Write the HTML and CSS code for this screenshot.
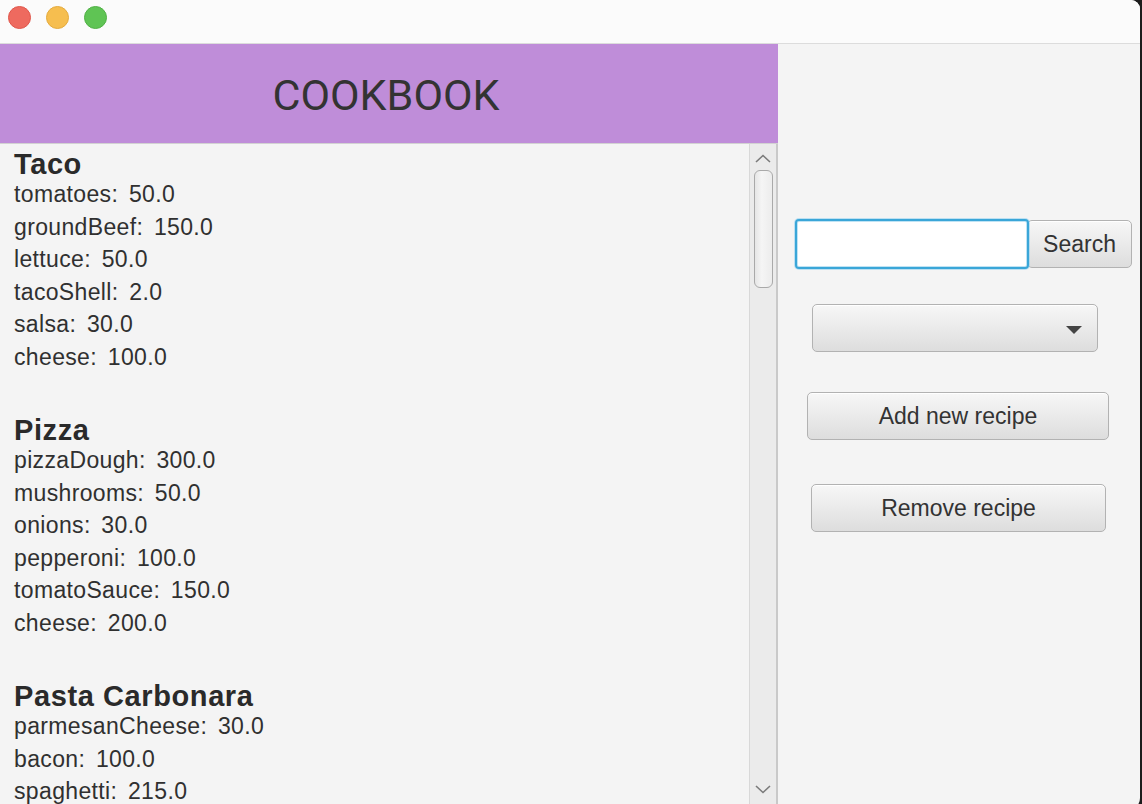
FILE: index.html
```html
<!DOCTYPE html>
<html>
<head>
<meta charset="utf-8">
<title>Cookbook</title>
<link rel="stylesheet" href="styles.css">
</head>
<body>
<div class="window">
  <div class="titlebar">
    <span class="light red"></span>
    <span class="light yellow"></span>
    <span class="light green"></span>
  </div>
  <div class="main">
    <div class="left">
      <div class="header">COOKBOOK</div>
      <div class="scrollpane">
        <div class="list">
          <div class="recipe">
            <div class="rtitle">Taco</div>
            <div class="ing">tomatoes: 50.0</div>
            <div class="ing">groundBeef: 150.0</div>
            <div class="ing">lettuce: 50.0</div>
            <div class="ing">tacoShell: 2.0</div>
            <div class="ing">salsa: 30.0</div>
            <div class="ing">cheese: 100.0</div>
          </div>
          <div class="recipe">
            <div class="rtitle">Pizza</div>
            <div class="ing">pizzaDough: 300.0</div>
            <div class="ing">mushrooms: 50.0</div>
            <div class="ing">onions: 30.0</div>
            <div class="ing">pepperoni: 100.0</div>
            <div class="ing">tomatoSauce: 150.0</div>
            <div class="ing">cheese: 200.0</div>
          </div>
          <div class="recipe">
            <div class="rtitle">Pasta Carbonara</div>
            <div class="ing">parmesanCheese: 30.0</div>
            <div class="ing">bacon: 100.0</div>
            <div class="ing">spaghetti: 215.0</div>
          </div>
        </div>
        <div class="vscroll">
          <div class="arrow up">
            <svg width="16" height="9" viewBox="0 0 16 9"><path d="M1 8 L8 1.5 L15 8" fill="none" stroke="#7a7a7a" stroke-width="1.6"/></svg>
          </div>
          <div class="thumb"></div>
          <div class="track-fill"></div>
          <div class="arrow down">
            <svg width="16" height="9" viewBox="0 0 16 9"><path d="M1 1 L8 7.5 L15 1" fill="none" stroke="#7a7a7a" stroke-width="1.6"/></svg>
          </div>
        </div>
      </div>
    </div>
    <div class="right">
      <div class="searchrow">
        <input class="field" type="text" value="">
        <button class="btn search">Search</button>
      </div>
      <div class="combo">
        <span class="tri"></span>
      </div>
      <button class="btn add">Add new recipe</button>
      <button class="btn remove">Remove recipe</button>
    </div>
  </div>
</div>
</body>
</html>
```

FILE: styles.css
```css
html, body {
  margin: 0;
  padding: 0;
  height: 804px;
  overflow: hidden;
}
body {
  background: #1c1c1c;
  font-family: "Liberation Sans", Arial, sans-serif;
}
.window {
  width: 1140px;
  height: 810px;
  background: #f4f4f4;
  border-top-right-radius: 9px;
  border-bottom-right-radius: 12px;
  overflow: hidden;
  display: flex;
  flex-direction: column;
}
.titlebar {
  flex: none;
  height: 35px;
  padding-bottom: 8px;
  padding-left: 8px;
  box-sizing: content-box;
  background: #fbfbfb;
  border-bottom: 1px solid #dcdcdc;
  display: flex;
  align-items: center;
  gap: 15px;
}
.light {
  width: 23px;
  height: 23px;
  border-radius: 50%;
  box-sizing: border-box;
}
.red { background: #ee6a5f; border: 1px solid #e0574b; }
.yellow { background: #f6be4f; border: 1px solid #e5ab3d; }
.green { background: #5fc454; border: 1px solid #50b145; }
.main {
  flex: 1;
  display: flex;
  min-height: 0;
}
.left {
  width: 778px;
  flex: none;
  display: flex;
  flex-direction: column;
}
.header {
  height: 100px;
  flex: none;
  box-sizing: border-box;
  padding-top: 2px;
  background: #bf8dd9;
  border-bottom: 1px solid #d2d2d2;
  display: flex;
  align-items: center;
  justify-content: center;
  font-family: Roboto, "Liberation Sans", sans-serif;
  font-size: 43px;
  color: #333;
  padding-right: 6px;
}
.scrollpane {
  flex: 1;
  display: flex;
  min-height: 0;
  border-right: 2px solid #c9c9c9;
}
.list {
  flex: 1;
  overflow: hidden;
  padding: 6px 0 0 14px;
  color: #303030;
}
.recipe {
  margin-bottom: 43px;
}
.rtitle {
  font-weight: bold;
  font-size: 29px;
  line-height: 28px;
  letter-spacing: 0.6px;
  color: #2a2a2a;
}
.ing {
  font-size: 23px;
  line-height: 32.5px;
  letter-spacing: 0.35px;
  word-spacing: 4px;
}
.vscroll {
  width: 26px;
  flex: none;
  background: #ebebeb;
  border-left: 1px solid #d8d8d8;
  display: flex;
  flex-direction: column;
  align-items: center;
}
.arrow {
  flex: none;
  display: flex;
  align-items: center;
  justify-content: center;
}
.arrow.up { padding-top: 2px; height: 24px; }
.thumb {
  width: 19px;
  height: 118px;
  box-sizing: border-box;
  border: 1px solid #a9a9a9;
  border-radius: 6px;
  background: linear-gradient(to right, #e6e6e6, #f5f5f5 40%, #ececec);
  flex: none;
  margin-left: 4px;
  align-self: flex-start;
}
.track-fill { flex: 1; }
.arrow.down { height: 26px; margin-bottom: 8px; }
.right {
  flex: 1;
  display: flex;
  flex-direction: column;
  align-items: flex-start;
}
.searchrow {
  display: flex;
  align-items: center;
  margin-top: 175px;
  margin-left: 17px;
}
.field {
  position: relative;
  z-index: 1;
  width: 234px;
  height: 50px;
  box-sizing: border-box;
  border: 2px solid #3aa6d8;
  border-radius: 4px;
  background: #fff;
  box-shadow: 0 0 0 1px rgba(150, 210, 240, 0.6), inset 0 0 0 1px #bfe3f4;
  margin-right: -2px;
  outline: none;
  padding: 0 8px;
  font-size: 22px;
}
.btn {
  height: 48px;
  box-sizing: border-box;
  border: 1px solid #b2b2b2;
  border-radius: 5px;
  background: linear-gradient(to bottom, #f7f7f7, #e9e9e9 55%, #dddddd);
  font-family: "Liberation Sans", Arial, sans-serif;
  font-size: 23px;
  color: #333;
  padding: 0;
  box-shadow: inset 0 1px 0 #ffffff;
}
.search {
  width: 105px;
}
.combo {
  width: 286px;
  height: 48px;
  box-sizing: border-box;
  border: 1px solid #b2b2b2;
  border-radius: 5px;
  background: linear-gradient(to bottom, #f7f7f7, #e9e9e9 55%, #dddddd);
  box-shadow: inset 0 1px 0 #ffffff;
  margin-top: 35px;
  margin-left: 34px;
  display: flex;
  align-items: center;
  justify-content: flex-end;
  padding-right: 15px;
}
.tri {
  width: 0;
  height: 0;
  border-left: 8px solid transparent;
  border-right: 8px solid transparent;
  border-top: 8px solid #444;
  margin-top: 3px;
}
.add {
  width: 302px;
  margin-top: 40px;
  margin-left: 29px;
}
.remove {
  width: 295px;
  margin-top: 44px;
  margin-left: 33px;
}
```
